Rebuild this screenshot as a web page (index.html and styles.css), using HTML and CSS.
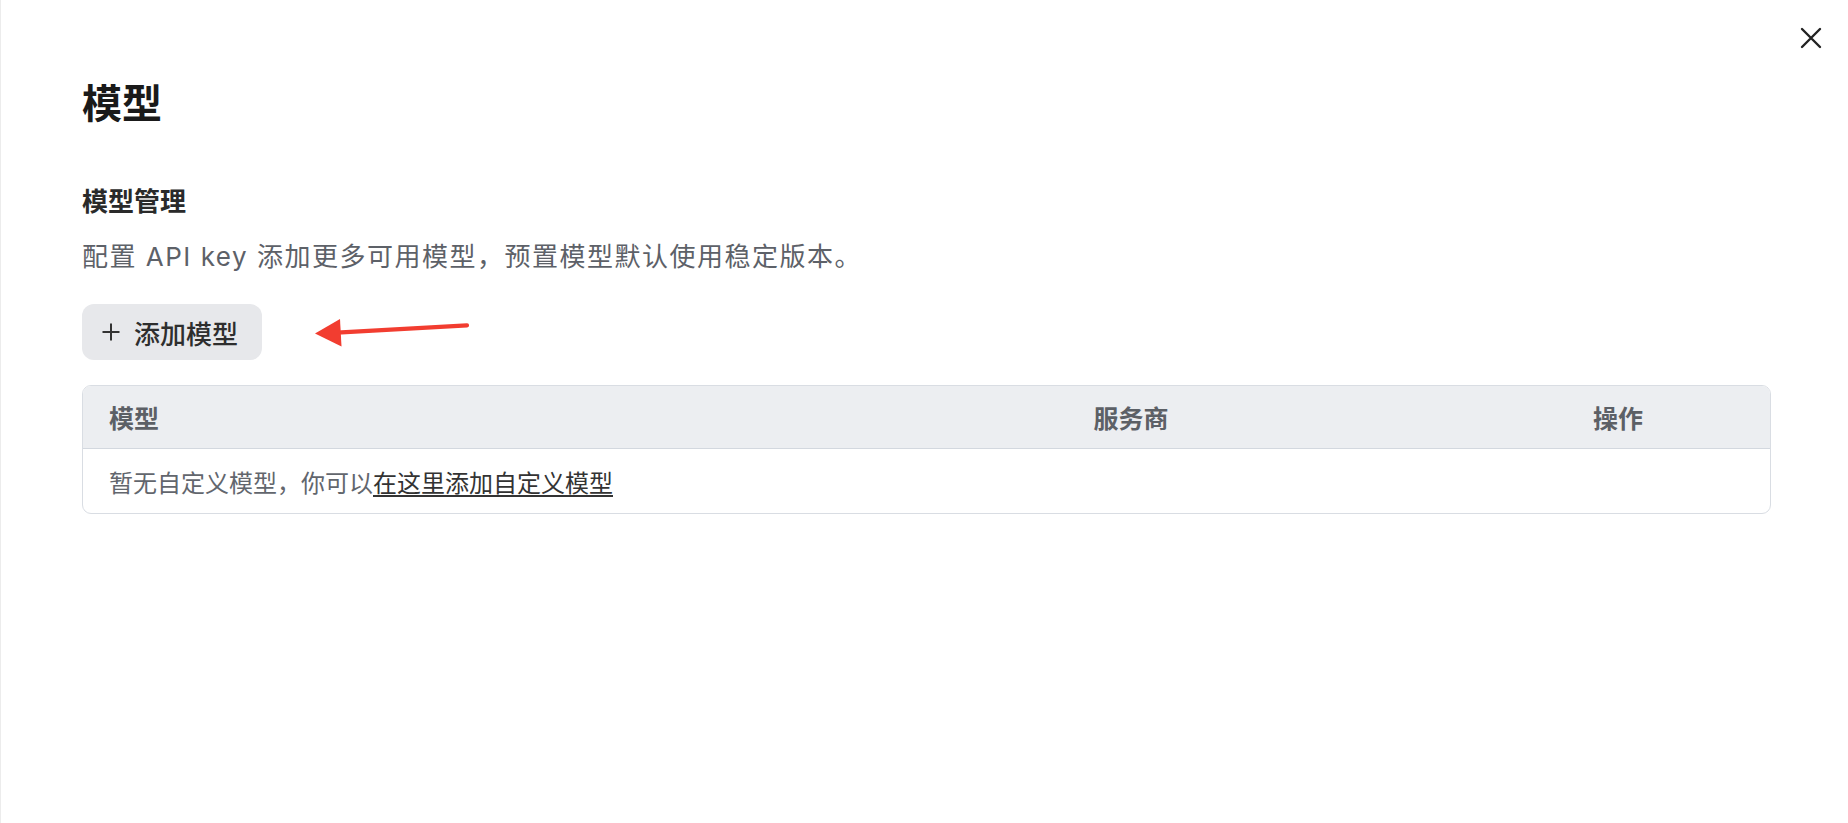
FILE: index.html
```html
<!DOCTYPE html>
<html lang="zh-CN">
<head>
<meta charset="utf-8">
<title>模型</title>
<link rel="stylesheet" href="styles.css">
</head>
<body>
<div class="page">
  <button class="close" aria-label="关闭">
    <svg width="22" height="22" viewBox="0 0 22 22"><path d="M2 2 L20 20 M20 2 L2 20" stroke="#222" stroke-width="2.4" stroke-linecap="round" fill="none"/></svg>
  </button>
  <h1 class="title">模型</h1>
  <h2 class="subtitle">模型管理</h2>
  <p class="desc">配置 API key 添加更多可用模型，预置模型默认使用稳定版本。</p>
  <div class="btn-row">
    <button class="add-btn">
      <svg width="20" height="20" viewBox="0 0 20 20"><path d="M10 1.5 V18.5 M1.5 10 H18.5" stroke="#333" stroke-width="2" fill="none"/></svg>
      <span>添加模型</span>
    </button>
    <svg class="arrow" width="180" height="60" viewBox="0 0 180 60">
      <path d="M36 32.6 L166 25.4" stroke="#f23d30" stroke-width="4.2" stroke-linecap="round" fill="none"/>
      <path d="M14 33.5 L39 19 L40.5 46.5 Z" fill="#f23d30"/>
    </svg>
  </div>
  <div class="table">
    <div class="thead">
      <div class="cell">模型</div>
      <div class="cell">服务商</div>
      <div class="cell">操作</div>
    </div>
    <div class="tbody">
      <div class="empty">暂无自定义模型，你可以<a href="#" class="link">在这里添加自定义模型</a></div>
    </div>
  </div>
</div>
</body>
</html>
```
FILE: styles.css
```css
* { box-sizing: border-box; }
html, body { margin: 0; padding: 0; background: #fff; }
body {
  font-family: "Inter", "Noto Sans CJK SC", sans-serif;
  color: #1a1a1a;
}
.page {
  position: relative;
  width: 1848px;
  height: 823px;
  padding: 80px 78px 0 81px;
  border-left: 1px solid #ececec;
  overflow: hidden;
}
.close {
  position: absolute;
  top: 27px;
  right: 26px;
  width: 22px;
  height: 22px;
  padding: 0;
  border: 0;
  background: transparent;
  display: flex;
}
.title {
  margin: 0;
  font-size: 40px;
  line-height: 48px;
  font-weight: 700;
  color: #1a1a1a;
}
.subtitle {
  margin: 57px 0 0;
  font-size: 26px;
  line-height: 34px;
  font-weight: 700;
  color: #2a2a2a;
}
.desc {
  margin: 21px 0 0;
  font-size: 26px;
  line-height: 34px;
  letter-spacing: 1.5px;
  color: #5d6168;
}
.btn-row {
  position: relative;
  margin-top: 30px;
  height: 56px;
  display: flex;
}
.add-btn {
  display: flex;
  align-items: center;
  gap: 13px;
  height: 56px;
  padding: 0 24px 0 19px;
  border: 0;
  border-radius: 12px;
  background: #e7e8eb;
  font-family: inherit;
  font-size: 26px;
  font-weight: 500;
  color: #2e2e2e;
}
.arrow {
  position: absolute;
  left: 219px;
  top: -4px;
}
.table {
  margin-top: 25px;
  width: 1689px;
  border: 1px solid #d9dde3;
  border-radius: 9px;
  overflow: hidden;
}
.thead {
  display: grid;
  grid-template-columns: 984fr 499fr 203fr;
  height: 63px;
  align-items: center;
  background: #eceef1;
  border-bottom: 1.5px solid #d3d8df;
}
.cell {
  padding-left: 26px;
  font-size: 25px;
  font-weight: 700;
  color: #5c6066;
}
.tbody {
  height: 64px;
  display: flex;
  align-items: center;
}
.empty {
  padding-left: 26px;
  font-size: 24px;
  color: #62666d;
}
.link {
  color: #333;
  text-decoration: underline;
  text-underline-offset: 3px;
}
```
